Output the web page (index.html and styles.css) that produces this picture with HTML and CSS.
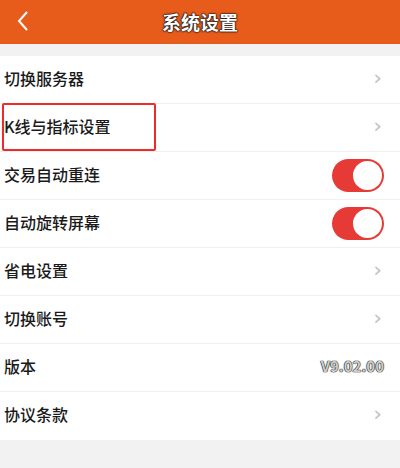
FILE: index.html
```html
<!DOCTYPE html>
<html lang="zh-CN">
<head>
  <meta charset="UTF-8">
  <title>系统设置</title>
  <link rel="stylesheet" href="styles.css">
</head>
<body>
  <div class="header">
    <span class="back">
      <svg width="14" height="22" viewBox="0 0 14 22"><path d="M11 2 L3 11 L11 20" fill="none" stroke="#fff" stroke-width="2"/></svg>
    </span>
    <h1>系统设置</h1>
  </div>

  <ul class="list">
    <li class="row">
      <span class="label">切换服务器</span>
      <span class="arrow">&#x203A;</span>
    </li>
    <li class="row">
      <span class="label">K线与指标设置</span>
      <span class="arrow">&#x203A;</span>
      <span class="mark"></span>
    </li>
    <li class="row">
      <span class="label">交易自动重连</span>
      <span class="switch on"><span class="knob"></span></span>
    </li>
    <li class="row">
      <span class="label">自动旋转屏幕</span>
      <span class="switch on"><span class="knob"></span></span>
    </li>
    <li class="row">
      <span class="label">省电设置</span>
      <span class="arrow">&#x203A;</span>
    </li>
    <li class="row">
      <span class="label">切换账号</span>
      <span class="arrow">&#x203A;</span>
    </li>
    <li class="row">
      <span class="label">版本</span>
      <span class="version">V9.02.00</span>
    </li>
    <li class="row">
      <span class="label">协议条款</span>
      <span class="arrow">&#x203A;</span>
    </li>
  </ul>
</body>
</html>
```

FILE: styles.css
```css
body {
  margin: 0;
  background: #f2f2f2;
  font-family: "Noto Sans CJK SC", "Noto Sans", sans-serif;
}

.header {
  height: 44px;
  background: #e85c1b;
  display: flex;
  align-items: center;
  justify-content: center;
  position: relative;
}

.header h1 {
  margin: 0 0 2px;
  font-size: 19px;
  font-weight: 700;
  color: #fff;
  text-shadow: 0 0 1px #111, 0 0 1px #111, 0 0 2px #222, 0 0 2px #222;
}

.back {
  position: absolute;
  left: 16px;
  top: 10px;
  display: flex;
}

.list {
  list-style: none;
  margin: 12px 0 0;
  padding: 0;
  background: #fff;
}

.row {
  height: 47px;
  border-bottom: 1px solid #efefef;
  display: flex;
  align-items: center;
  justify-content: space-between;
  padding: 0 16px 4px 4px;
  box-sizing: border-box;
  height: 48px;
  position: relative;
}

.row:last-child {
  border-bottom: none;
}

.label {
  font-size: 16px;
  font-weight: 500;
  color: #1a1a1a;
}

.arrow {
  font-family: "DejaVu Sans", sans-serif;
  font-size: 22px;
  color: #c4c4c4;
  line-height: 1;
  margin-right: 2px;
}

.mark {
  position: absolute;
  left: 2px;
  top: -1px;
  width: 150px;
  height: 44px;
  border: 2px solid #ee2a2a;
  border-radius: 2px;
}

.switch {
  width: 52px;
  height: 33px;
  border-radius: 17px;
  background: #e53a35;
  display: flex;
  align-items: center;
  justify-content: flex-end;
  padding: 0 2px;
  box-sizing: border-box;
  margin-top: 4px;
}

.knob {
  width: 29px;
  height: 29px;
  border-radius: 50%;
  background: #fff;
}

.version {
  font-size: 15px;
  font-weight: 700;
  color: #ccc;
  text-shadow: 0 0 1px #222, 0 0 1px #222, 0 0 1px #222;
}
```
